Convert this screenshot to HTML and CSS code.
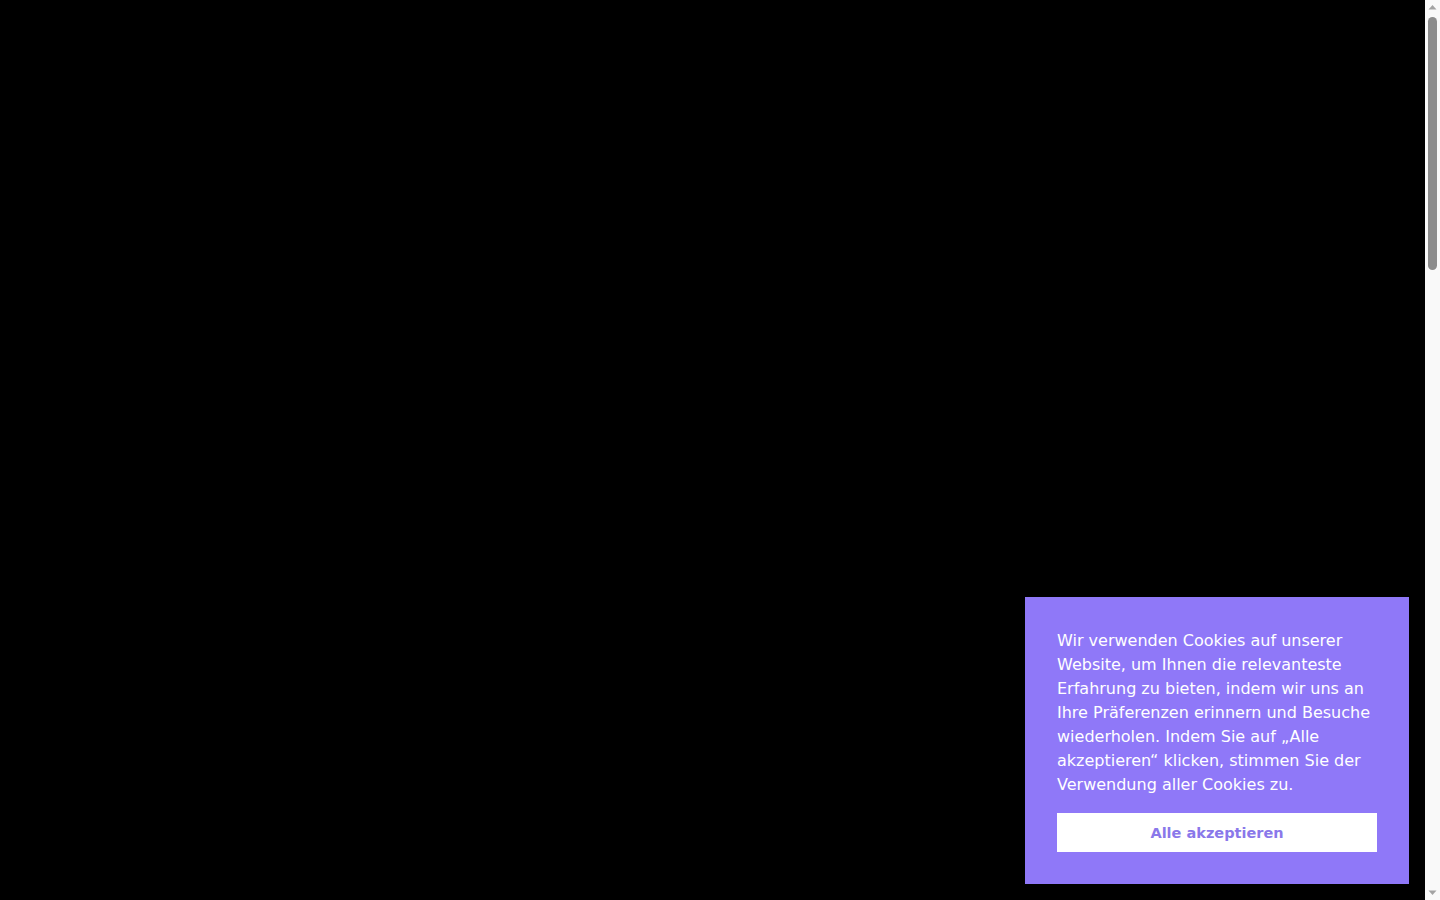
FILE: index.html
```html
<!DOCTYPE html>
<html lang="de">
<head>
<meta charset="utf-8">
<title>Cookies</title>
<link rel="stylesheet" href="styles.css">
</head>
<body>
<main class="page"></main>
<div class="scrollbar" aria-hidden="true">
  <svg class="scroll-arrow" width="15" height="15" viewBox="0 0 15 15"><polygon points="3.5,9.5 7.5,5 11.5,9.5" fill="#a3a3a3"/></svg>
  <div class="scroll-thumb"></div>
  <svg class="scroll-arrow scroll-arrow-down" width="15" height="15" viewBox="0 0 15 15"><polygon points="3.5,5.5 11.5,5.5 7.5,10" fill="#a3a3a3"/></svg>
</div>
<div class="cookie-banner">
  <p class="cookie-text">Wir verwenden Cookies auf unserer Website, um Ihnen die relevanteste Erfahrung zu bieten, indem wir uns an Ihre Präferenzen erinnern und Besuche wiederholen. Indem Sie auf „Alle akzeptieren“ klicken, stimmen Sie der Verwendung aller Cookies zu.</p>
  <button class="cookie-button">Alle akzeptieren</button>
</div>
</body>
</html>
```
FILE: styles.css
```css
html, body {
  margin: 0;
  padding: 0;
  background: #000;
  font-family: "DejaVu Sans", sans-serif;
}
.page {
  height: 3100px;
  background: #000;
}
.scrollbar {
  position: fixed;
  top: 0;
  right: 0;
  bottom: 0;
  width: 15px;
  background: #f9f9f9;
  display: flex;
  flex-direction: column;
  align-items: center;
}
.scroll-arrow {
  display: block;
  flex: none;
}
.scroll-arrow-down {
  margin-top: auto;
}
.scroll-thumb {
  margin-top: 2px;
  width: 9px;
  height: 253px;
  border-radius: 5px;
  background: #8c8c8c;
}
.cookie-banner {
  position: fixed;
  right: 31px;
  bottom: 16px;
  width: 384px;
  box-sizing: border-box;
  padding: 32px;
  background: #8f78f8;
  display: flex;
  flex-direction: column;
  gap: 16px;
}
.cookie-text {
  margin: 0;
  color: #fff;
  font-size: 16px;
  line-height: 24px;
}
.cookie-button {
  height: 39px;
  border: none;
  background: #fff;
  color: #8a78ea;
  font-family: "DejaVu Sans", sans-serif;
  font-weight: bold;
  font-size: 14.5px;
  cursor: pointer;
}
```
